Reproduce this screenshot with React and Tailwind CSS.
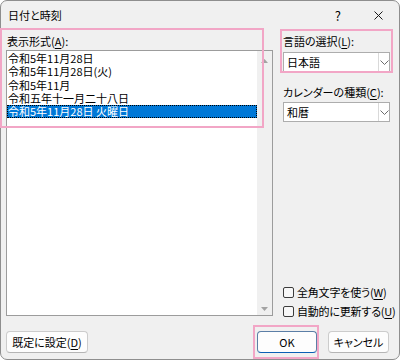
import React from 'react';

// 下線付きのアクセスキー
const Key = ({ children }) => (
  <span className="underline decoration-1 underline-offset-[2px]">{children}</span>
);

const Chevron = () => (
  <svg width="9" height="5" viewBox="0 0 9 5" className="block">
    <path d="M0.5 0.5 L4.5 4.5 L8.5 0.5" fill="none" stroke="#6b6b6b" strokeWidth="1" />
  </svg>
);

const Select = ({ value }) => (
  <div className="flex h-[20px] w-[107px] border border-[#adadad] bg-white">
    <div className="flex flex-1 items-center pl-[3px] leading-none">{value}</div>
    <div className="flex w-[11px] items-center justify-center border-l border-[#d9d9d9]">
      <Chevron />
    </div>
  </div>
);

const Checkbox = ({ children }) => (
  <div className="flex h-[18px] items-center gap-[3px] whitespace-nowrap">
    <div className="h-[11px] w-[11px] shrink-0 rounded-[2px] border border-[#3c3c3c] bg-[#f7f7f7]" />
    <span className="leading-none tracking-[-0.2px]">{children}</span>
  </div>
);

const Arrow = ({ down }) => (
  <svg width="7" height="4" viewBox="0 0 7 4" className="block">
    <polygon points={down ? '0,0 7,0 3.5,4' : '0,4 7,4 3.5,0'} fill="#a3a3a3" />
  </svg>
);

const formats = [
  '令和5年11月28日',
  '令和5年11月28日(火)',
  '令和5年11月',
  '令和五年十一月二十八日',
  '令和5年11月28日 火曜日',
];

export default function App() {
  const selected = 4;

  return (
    <div className="relative h-[362px] w-[400px] bg-white font-['Noto_Sans_CJK_JP',sans-serif] text-[11px] text-black [font-feature-settings:'palt']">
      <div className="flex h-[360px] w-[400px] flex-col rounded-[7px] border border-[#8e8e8e] bg-[#f0f0f0]">
        {/* Title bar */}
        <div className="flex h-[28px] items-center pl-[7px] pr-[16px]">
          <span className="leading-none">日付と時刻</span>
          <span className="ml-auto mr-[33px] text-[13px] leading-none">?</span>
          <svg width="9" height="9" viewBox="0 0 9 9" className="block">
            <path d="M0.5 0.5 L8.5 8.5 M8.5 0.5 L0.5 8.5" stroke="#1a1a1a" strokeWidth="1" />
          </svg>
        </div>

        {/* Body */}
        <div className="flex h-[293px] gap-[10px] pl-[5px]">
          {/* Format list */}
          <div className="flex w-[267px] flex-col">
            <div className="mt-[4px] mb-[1px] h-[16px] pl-[1px] leading-[16px]">
              表示形式(<Key>A</Key>):
            </div>
            <div className="flex h-[266px] border border-[#9c9c9c] bg-white">
              <div className="flex-1 pt-[1px]">
                {formats.map((f, i) => (
                  <div
                    key={f}
                    className={
                      i === selected
                        ? 'h-[13.3px] border border-dotted border-black bg-[#0078d7] leading-[11.3px] text-white'
                        : 'h-[13.3px] pl-[1px] leading-[13.3px]'
                    }
                  >
                    {f}
                  </div>
                ))}
              </div>
              <div className="flex w-[15px] flex-col items-center justify-between bg-[#f0f0f0] pt-[8px] pb-[4px]">
                <Arrow />
                <Arrow down />
              </div>
            </div>
          </div>

          {/* Right column */}
          <div className="flex w-[107px] flex-col">
            <div className="mt-[4px] h-[16px] leading-[16px]">
              言語の選択(<Key>L</Key>):
            </div>
            <div className="mt-[3px]">
              <Select value="日本語" />
            </div>
            <div className="mt-[12px] h-[16px] leading-[16px]">
              カレンダーの種類(<Key>C</Key>):
            </div>
            <div className="mt-[2px]">
              <Select value="和暦" />
            </div>
            <div className="mt-auto flex flex-col gap-[1px] pb-[2px]">
              <Checkbox>
                全角文字を使う(<Key>W</Key>)
              </Checkbox>
              <Checkbox>
                自動的に更新する(<Key>U</Key>)
              </Checkbox>
            </div>
          </div>
        </div>

        {/* Buttons */}
        <div className="mt-[9px] flex h-[22px] pl-[5px] pr-[10px]">
          <button className="flex h-[22px] w-[82px] items-center justify-center rounded-[4px] border border-[#cccccc] border-b-[#b5b5b5] bg-[#fdfdfd] leading-none">
            既定に設定(<Key>D</Key>)
          </button>
          <button className="ml-auto flex h-[22px] w-[60px] items-center justify-center rounded-[4px] border border-[#5b7ea6] border-b-[#0a5fb4] bg-[#fdfdfd] leading-none">
            OK
          </button>
          <button className="ml-[11px] flex h-[22px] w-[61px] items-center justify-center rounded-[4px] border border-[#cccccc] border-b-[#b5b5b5] bg-[#fdfdfd] leading-none">
            キャンセル
          </button>
        </div>
      </div>

      {/* Highlight annotations */}
      <div className="pointer-events-none absolute left-0 top-[28px] h-[100px] w-[264px] border-2 border-[#f2a6c6]" />
      <div className="pointer-events-none absolute left-[280px] top-[29px] h-[44px] w-[113px] border-2 border-[#f2a6c6]" />
      <div className="pointer-events-none absolute left-[253px] top-[325px] h-[34px] w-[66px] border-2 border-[#f2a6c6]" />
    </div>
  );
}
